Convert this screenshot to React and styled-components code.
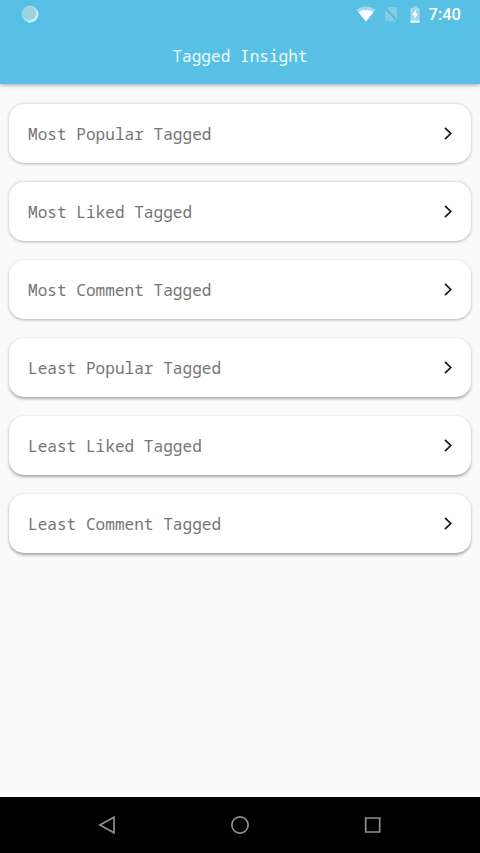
import React from "react";
import styled, { createGlobalStyle } from "styled-components";

const items = [
  "Most Popular Tagged",
  "Most Liked Tagged",
  "Most Comment Tagged",
  "Least Popular Tagged",
  "Least Liked Tagged",
  "Least Comment Tagged"
];

const StatusBar = () => (
  <StatusRow>
    <svg width="18" height="18" viewBox="0 0 18 18">
      <circle cx="9" cy="9" r="8.2" fill="#a9e3f1" />
      <circle cx="8.2" cy="8.2" r="6.6" fill="#9fd0e2" />
      <path d="M16.2 6.2A8 8 0 0 1 7 16.6" fill="none" stroke="#d4fafc" strokeWidth="1.4" />
    </svg>
    <StatusIcons>
      <svg width="20" height="16" viewBox="0 0 20 16">
        <path d="M0.4 3.8C6 -0.7 14 -0.7 19.6 3.8L10 15.4z" fill="#9bdaef" />
        <path d="M2.4 6.1C7 3.2 13 3.2 17.6 6.1L10 15.4z" fill="#fff" />
      </svg>
      <svg width="15" height="17" viewBox="0 0 15 17">
        <path d="M5 1h8v14.6H1.2V5z" fill="#83cce5" />
        <path d="M1 1.4L14.6 15.6" stroke="#58c0e5" strokeWidth="1.4" />
        <path d="M0.8 2.4L14 16.2" stroke="#5ba5c0" strokeWidth="1" />
      </svg>
      <svg width="10" height="17" viewBox="0 0 10 17">
        <path d="M3 0.4h4v1.5h2.6v14.7H0.4V1.9H3z" fill="#9ed9ec" />
        <path d="M0.4 14.7h9.2v1.9H0.4z" fill="#fff" />
        <path d="M5.8 3.4L2 9.2h2.4v4L8 7.6H5.8z" fill="#fff" />
      </svg>
      <Clock>7:40</Clock>
    </StatusIcons>
  </StatusRow>
);

const NavBar = () => (
  <NavRow>
    <svg width="20" height="20" viewBox="0 0 20 20">
      <path d="M17 2.2v15.6L2.9 10z" />
    </svg>
    <svg width="20" height="20" viewBox="0 0 20 20">
      <circle cx="10" cy="10" r="8.1" />
    </svg>
    <svg width="20" height="20" viewBox="0 0 20 20">
      <path d="M2.7 3h14v14h-14z" />
    </svg>
  </NavRow>
);

class App extends React.Component {
  render() {
    return (
      <Screen>
        <GlobalStyle />
        <Header>
          <StatusBar />
          <Title>Tagged Insight</Title>
        </Header>
        <List>
          {items.map((label, i) => (
            <Card key={label} $depth={i}>
              <span>{label}</span>
              <svg width="10" height="14" viewBox="0 0 10 14">
                <path d="M2 0.9L7.7 6.5L2 12.1" fill="none" stroke="#161616" strokeWidth="1.7" />
              </svg>
            </Card>
          ))}
        </List>
        <NavBar />
      </Screen>
    );
  }
}

const GlobalStyle = createGlobalStyle`
  * {
    box-sizing: border-box;
  }

  body {
    margin: 0;
  }
`;

const Screen = styled.div`
  display: flex;
  flex-direction: column;
  width: 480px;
  height: 853px;
  overflow: hidden;
  background: #fafafa;
  font-family: "Droid Sans Mono", "Noto Sans Mono", "DejaVu Sans Mono", monospace;
  font-size: 16.1px;
`;

const Header = styled.header`
  height: 84px;
  background: #58c0e5;
  box-shadow: 0 1px 4px rgba(0, 0, 0, 0.34);
`;

const StatusRow = styled.div`
  display: flex;
  align-items: center;
  justify-content: space-between;
  height: 28px;
  padding: 0 19px 0 21px;
`;

const StatusIcons = styled.div`
  display: flex;
  align-items: center;

  svg:nth-child(2) {
    margin-left: 8px;
  }

  svg:nth-child(3) {
    margin-left: 11px;
  }
`;

const Clock = styled.span`
  margin-left: 9px;
  padding-top: 2px;
  font: 500 16.5px/28px Roboto, sans-serif;
  color: #fff;
`;

const Title = styled.h1`
  margin: 0;
  font-size: inherit;
  font-weight: 400;
  line-height: 57px;
  text-align: center;
  color: #edfcff;
`;

const List = styled.main`
  flex: 1;
  display: flex;
  flex-direction: column;
  gap: 19px;
  padding: 20px 9px;
`;

/* shadows drop further the lower a card sits on the screen */
const Card = styled.div`
  display: flex;
  align-items: center;
  justify-content: space-between;
  height: 59px;
  padding: 1px 18px 0 19px;
  border-radius: 15px;
  background: #fff;
  color: #757575;
  box-shadow: 0 ${p => 0.6 + p.$depth * 0.2}px 3px rgba(0, 0, 0, ${p => 0.27 + p.$depth * 0.015});
`;

const NavRow = styled.nav`
  display: flex;
  align-items: center;
  justify-content: space-between;
  height: 56px;
  padding: 0 97px;
  background: #000;

  svg {
    fill: none;
    stroke: #8f8f8f;
    stroke-width: 1.7;
  }
`;

export default App;
